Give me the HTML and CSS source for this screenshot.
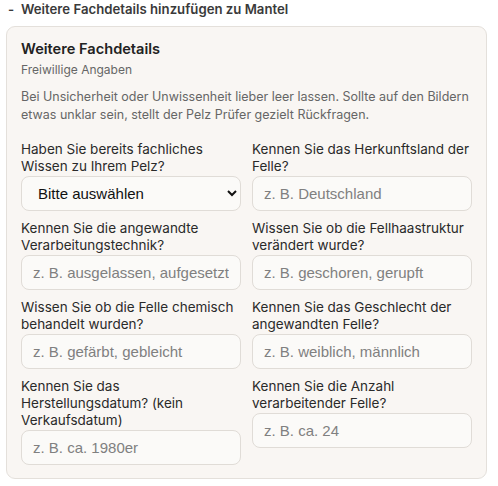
FILE: index.html
```html
<!DOCTYPE html>
<html lang="de">
<head>
<meta charset="utf-8">
<link rel="stylesheet" href="styles.css">
</head>
<body>
<div class="page">
  <div class="section-head"><span class="minus">-</span>Weitere Fachdetails hinzufügen zu Mantel</div>
  <div class="card">
    <h2 class="card-title">Weitere Fachdetails</h2>
    <p class="card-sub">Freiwillige Angaben</p>
    <p class="card-text">Bei Unsicherheit oder Unwissenheit lieber leer lassen. Sollte auf den Bildern etwas unklar sein, stellt der Pelz Prüfer gezielt Rückfragen.</p>
    <div class="grid">
      <div class="field">
        <label class="label">Haben Sie bereits fachliches Wissen zu Ihrem Pelz?</label>
        <select class="control select"><option>Bitte auswählen</option></select>
      </div>
      <div class="field">
        <label class="label">Kennen Sie das Herkunftsland der Felle?</label>
        <input class="control" type="text" placeholder="z. B. Deutschland">
      </div>
      <div class="field">
        <label class="label">Kennen Sie die angewandte Verarbeitungstechnik?</label>
        <input class="control" type="text" placeholder="z. B. ausgelassen, aufgesetzt">
      </div>
      <div class="field">
        <label class="label">Wissen Sie ob die Fellhaastruktur verändert wurde?</label>
        <input class="control" type="text" placeholder="z. B. geschoren, gerupft">
      </div>
      <div class="field">
        <label class="label">Wissen Sie ob die Felle chemisch behandelt wurden?</label>
        <input class="control" type="text" placeholder="z. B. gefärbt, gebleicht">
      </div>
      <div class="field">
        <label class="label">Kennen Sie das Geschlecht der angewandten Felle?</label>
        <input class="control" type="text" placeholder="z. B. weiblich, männlich">
      </div>
      <div class="field">
        <label class="label">Kennen Sie das Herstellungsdatum? (kein Verkaufsdatum)</label>
        <input class="control" type="text" placeholder="z. B. ca. 1980er">
      </div>
      <div class="field">
        <label class="label">Kennen Sie die Anzahl verarbeitender Felle?</label>
        <input class="control" type="text" placeholder="z. B. ca. 24">
      </div>
    </div>
  </div>
</div>
</body>
</html>
```
FILE: styles.css
```css
* { box-sizing: border-box; }
html, body { margin: 0; padding: 0; background: #ffffff; }
body { font-family: "Inter", "Noto Sans", sans-serif; color: #2a2a2a; }
.page { padding: 1px 0 0 6px; width: 487px; }
.section-head {
  font-size: 13.2px;
  font-weight: 600;
  color: #3a3a3a;
  line-height: 17px;
  padding-left: 2px;
}
.minus { display: inline-block; width: 13px; }
.card {
  margin-top: 8px;
  width: 481px;
  background: #f9f6f3;
  border: 1px solid #e4e0db;
  border-radius: 9px;
  padding: 12px 14px 13px 14px;
}
.card-title {
  margin: 0;
  font-size: 14.6px;
  font-weight: 600;
  line-height: 20px;
  color: #222;
}
.card-sub {
  margin: 3px 0 0;
  font-size: 12px;
  line-height: 16px;
  color: #666;
}
.card-text {
  margin: 10px 0 0;
  font-size: 12.5px;
  line-height: 18px;
  color: #666;
}
.grid {
  margin-top: 17px;
  display: grid;
  grid-template-columns: 1fr 1fr;
  column-gap: 11px;
  row-gap: 9px;
  align-items: start;
}
.field { display: flex; flex-direction: column; }
.label {
  font-size: 13.5px;
  line-height: 17px;
  color: #2a2a2a;
  margin-bottom: 1px;
}
.control {
  height: 35px;
  width: 100%;
  border: 1px solid #e0dcd7;
  border-radius: 8px;
  background: #fbfaf8;
  padding: 0 11px;
  font-family: "Liberation Sans", Arial, sans-serif;
  font-size: 15px;
  color: #222;
}
.control::placeholder { color: #808080; }
.select {
  padding-left: 12px;
  color: #111;
}
```
